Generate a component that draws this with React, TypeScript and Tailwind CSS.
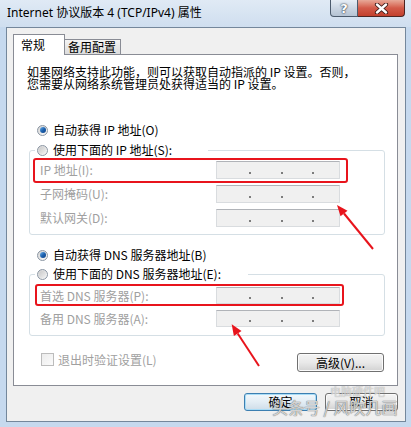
import React from "react";

function Radio({ checked }: { checked?: boolean }) {
  return (
    <span className="w-[11px] h-[11px] shrink-0 rounded-full border border-[#8b96a3] bg-gradient-to-br from-[#d4d4d4] to-[#fbfbfb] flex items-center justify-center">
      {checked ? (
        <span className="w-[6px] h-[6px] rounded-full bg-gradient-to-br from-[#6fb3ec] via-[#1d63b0] to-[#0d3f85]" />
      ) : (
        <span className="w-[7px] h-[7px] rounded-full bg-gradient-to-br from-[#c9c9c9] to-[#f2f2f2]" />
      )}
    </span>
  );
}

function IpBox({ h = 18 }: { h?: number }) {
  return (
    <div
      className={`${h === 18 ? "h-[18px]" : "h-[17px]"} w-[124px] border border-[#d9dcdf] border-t-[#b0b3b8] bg-[#f0f0f0] flex items-end pb-[4px]`}
    >
      <span className="w-[32px]" />
      <span className="w-[2px] h-[2px] bg-[#7c7c7c]" />
      <span className="w-[30px]" />
      <span className="w-[2px] h-[2px] bg-[#7c7c7c]" />
      <span className="w-[29px]" />
      <span className="w-[2px] h-[2px] bg-[#7c7c7c]" />
    </div>
  );
}

function Row({ label, h = 18 }: { label: string; h?: number }) {
  return (
    <div className={`flex items-center ${h === 18 ? "h-[18px]" : "h-[17px]"}`}>
      <span className="w-[176px] text-[#a0a0a0] leading-[14px] whitespace-nowrap">{label}</span>
      <IpBox h={h} />
    </div>
  );
}

export default function App() {
  return (
    <div className="relative w-[411px] h-[427px] overflow-hidden bg-[#c6d9ee] text-[12px] text-black font-['Noto_Sans_CJK_SC','Noto_Sans',sans-serif]">
      {/* title bar */}
      <div className="h-[27px] flex bg-gradient-to-b from-[#e0eaf5] to-[#cfdeef]">
        <div className="pl-[7px] pt-[5px] leading-[16px] text-[12px] whitespace-nowrap font-['Noto_Sans','Noto_Sans_CJK_SC',sans-serif]">
          Internet 协议版本 4 (TCP/IPv4) 属性
        </div>
        <div className="ml-auto mr-[6px] flex h-[17px]">
          <div className="w-[28px] h-[17px] border border-t-0 border-[#4c5b6d] rounded-bl-[4px] bg-gradient-to-b from-[#e6edf5] via-[#cbd6e3] to-[#b5c3d3] flex items-center justify-center text-white font-bold text-[13px] leading-none font-['DejaVu_Sans',sans-serif] [text-shadow:0_0_2px_#2b3440,0_0_1px_#2b3440]">
            ?
          </div>
          <div className="w-[47px] h-[17px] border border-t-0 border-l-0 border-[#4e2522] rounded-br-[4px] bg-gradient-to-b from-[#e7a898] via-[#d35a49] to-[#c2402d] flex items-center justify-center">
            <svg width="15" height="11" viewBox="0 0 15 11">
              <path d="M3 1.5 L12 9.5 M12 1.5 L3 9.5" stroke="#3a1a17" strokeWidth="4.2" strokeLinecap="round" />
              <path d="M3 1.5 L12 9.5 M12 1.5 L3 9.5" stroke="#ffffff" strokeWidth="2.4" strokeLinecap="round" />
            </svg>
          </div>
        </div>
      </div>

      {/* client area */}
      <div className="ml-[6px] w-[400px] h-[395px] border border-[#74879b] bg-[#f0f0f0] flex flex-col">
        {/* tabs */}
        <div className="ml-[6px] mt-[6px] h-[20px] flex items-end">
          <div className="relative z-10 w-[52px] h-[21px] -mb-px border border-b-0 border-[#898c95] bg-white pl-[7px] pt-[2px] leading-[16px] text-[12px]">
            常规
          </div>
          <div className="-ml-px w-[57px] h-[15px] border border-b-0 border-[#898c95] bg-gradient-to-b from-[#f4f4f4] to-[#dcdcdc] pl-[3px] leading-[14px] text-[12px] whitespace-nowrap">
            备用配置
          </div>
        </div>

        {/* panel */}
        <div className="ml-[6px] w-[385px] h-[332px] border border-[#898c95] bg-white flex flex-col">
          <p className="ml-[13px] mt-[11px] leading-[12px] whitespace-nowrap">
            如果网络支持此功能，则可以获取自动指派的 IP 设置。否则，
            <br />
            您需要从网络系统管理员处获得适当的 IP 设置。
          </p>

          <div className="ml-[23px] mt-[33px] h-[14px] flex items-center gap-[5px]">
            <Radio checked />
            <span className="leading-[14px] whitespace-nowrap">自动获得 IP 地址(O)</span>
          </div>

          <fieldset className="ml-[15px] mt-[6px] w-[356px] border border-[#d5dfe5] rounded-[3px] pb-[7px]">
            <legend className="ml-[5px] w-[173px] h-[14px] pl-[2px]">
              <div className="h-[14px] flex items-center gap-[5px]">
                <Radio />
                <span className="leading-[14px] whitespace-nowrap">使用下面的 IP 地址(S):</span>
              </div>
            </legend>
            <div className="pt-[4px] pl-[10px] flex flex-col gap-[6px]">
              <Row label="IP 地址(I):" />
              <Row label="子网掩码(U):" />
              <Row label="默认网关(D):" />
            </div>
          </fieldset>

          <div className="ml-[23px] mt-[13px] h-[14px] flex items-center gap-[5px]">
            <Radio checked />
            <span className="leading-[14px] whitespace-nowrap">自动获得 DNS 服务器地址(B)</span>
          </div>

          <fieldset className="ml-[15px] mt-[5px] w-[356px] border border-[#d5dfe5] rounded-[3px] pb-[8px]">
            <legend className="ml-[5px] w-[213px] h-[14px] pl-[2px]">
              <div className="h-[14px] flex items-center gap-[5px]">
                <Radio />
                <span className="leading-[14px] whitespace-nowrap">使用下面的 DNS 服务器地址(E):</span>
              </div>
            </legend>
            <div className="pt-[6px] pl-[10px] flex flex-col gap-[6px]">
              <Row label="首选 DNS 服务器(P):" h={17} />
              <Row label="备用 DNS 服务器(A):" h={17} />
            </div>
          </fieldset>

          <div className="mt-[17px] flex items-start justify-between">
            <div className="ml-[27px] h-[13px] flex items-center gap-[4px]">
              <span className="w-[13px] h-[13px] border border-[#bcbcbc] bg-gradient-to-br from-[#ececec] to-[#fbfbfb]" />
              <span className="text-[#a0a0a0] leading-[14px] whitespace-nowrap">退出时验证设置(L)</span>
            </div>
            <button className="mr-[13px] w-[87px] h-[19px] border border-[#707070] rounded-[3px] bg-gradient-to-b from-[#f4f4f4] via-[#e9e9e9] to-[#d2d2d2] shadow-[inset_0_0_0_1px_#fbfbfb] leading-[14px] text-[12px] flex items-center justify-center">
              高级(V)...
            </button>
          </div>
        </div>

        {/* bottom buttons */}
        <div className="ml-[6px] w-[385px] mt-[7px] flex justify-end gap-[8px]">
          <button className="w-[73px] h-[18px] border border-[#3c7fb1] rounded-[3px] bg-gradient-to-b from-[#f2f8fc] via-[#e3edf4] to-[#cfdde8] shadow-[inset_0_0_0_1px_#a9dcf6] leading-[14px] text-[12px] flex items-center justify-center">
            确定
          </button>
          <button className="w-[73px] h-[18px] border border-[#707070] rounded-[3px] bg-gradient-to-b from-[#f4f4f4] via-[#e9e9e9] to-[#d2d2d2] shadow-[inset_0_0_0_1px_#fbfbfb] leading-[14px] text-[12px] flex items-center justify-center">
            取消
          </button>
        </div>
      </div>

      {/* annotations */}
      <svg className="absolute inset-0 pointer-events-none" width="411" height="427" viewBox="0 0 411 427">
        <rect x="34" y="159" width="313" height="23" rx="2" fill="none" stroke="#e8141c" strokeWidth="2" />
        <rect x="36" y="285" width="307" height="20" rx="2" fill="none" stroke="#e8141c" strokeWidth="2" />
        <line x1="373" y1="249" x2="344" y2="213.5" stroke="#e8141c" strokeWidth="2" />
        <polygon points="337,205 347.5,210.7 340.5,216.3" fill="#e8141c" />
        <line x1="259" y1="366" x2="237.7" y2="333.5" stroke="#e8141c" strokeWidth="2" />
        <polygon points="231.7,324.3 241.5,331 233.9,336" fill="#e8141c" />
      </svg>

      {/* watermark */}
      <div className="absolute left-[330px] top-[385px] text-[11px] leading-[12px] text-white/60 [text-shadow:0_0_1px_#8a8a8a] whitespace-nowrap pointer-events-none">
        电脑硬件吧
      </div>
      <div className="absolute left-[272px] top-[398px] text-[16px] leading-[18px] text-white/70 [text-shadow:0_0_1px_#707070,0_0_1px_#707070] whitespace-nowrap pointer-events-none">
        头条号 / 风吹几画
      </div>
    </div>
  );
}
